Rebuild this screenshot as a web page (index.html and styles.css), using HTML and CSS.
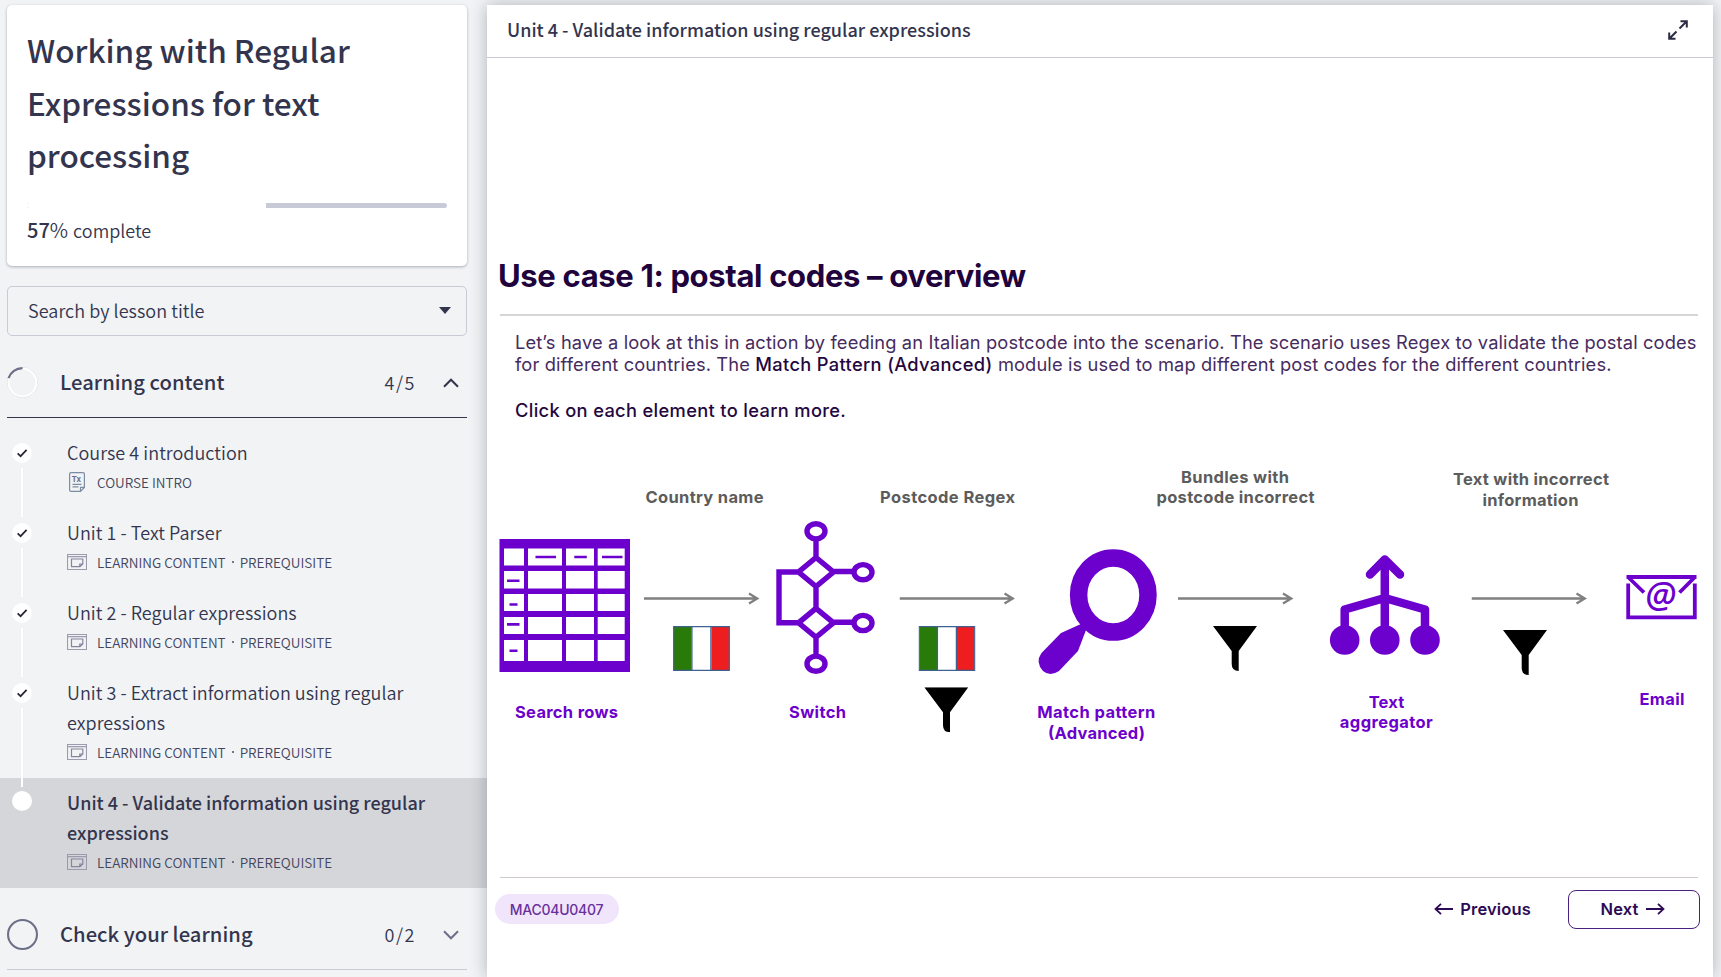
FILE: index.html
```html
<!DOCTYPE html>
<html lang="en">
<head>
<meta charset="utf-8">
<title>Working with Regular Expressions for text processing</title>
<link rel="stylesheet" href="styles.css">
</head>
<body>
<svg width="0" height="0" class="defs" aria-hidden="true">
  <symbol id="check" viewBox="0 0 20 20"><path d="M5.600 10.400 8.600 13.200 14.600 6.800" fill="none" stroke="#25263a" stroke-width="1.700"/></symbol>
  <symbol id="content" viewBox="0 0 20 16"><path d="M.5.5h19v15H.5zM.5 2.600h19" fill="none" stroke="#9a9bae" stroke-width="1.100"/><path d="M4.500 5h11.300v5l-2.800 2.700H4.500zM12.800 12.700V10h3" fill="none" stroke="#85869d" stroke-width="1.200"/></symbol>
  <symbol id="funnel" viewBox="0 0 44 45"><path d="M0 0H44L25.700 25V45Q18.700 45 18.700 38V25Z" fill="#000"/></symbol>
  <symbol id="flag" viewBox="0 0 57 45"><path d="M1 1h17.500v43H1z" fill="#2a7a0a"/><path d="M38.500 1H56v43H38.500z" fill="#ee1d1f"/><path d="M.7.7h55.600v43.600H.7zM18.900.7v43.600M37.900.7v43.600" fill="none" stroke="#3f6190" stroke-width="1.300"/></symbol>
  <symbol id="arrow" viewBox="0 0 116 14"><path d="M0 7H113M105 1.900 113.300 7 105 12.100" fill="none" stroke="#808080" stroke-width="2.300"/></symbol>
</svg>
<div class="app">
  <aside class="sidebar">
    <section class="course-card">
      <h1>Working with Regular<br>Expressions for text<br>processing</h1>
      <div class="progress"><div class="progress-done" style="width:57%"></div></div>
      <p class="percent"><b>57</b><span class="pct">%</span> complete</p>
    </section>
    <div class="search"><span>Search by lesson title</span><i class="caret"></i></div>

    <header class="section open">
      <svg class="ring" viewBox="0 0 30 30"><circle cx="15" cy="15" r="14.300" fill="none" stroke="#b9bac6" stroke-width=".8" stroke-dasharray="1.500 1"/><circle cx="15" cy="15" r="13.500" fill="none" stroke="#fff" stroke-width="2"/><path d="M1.500 10.800A14.200 14.200 0 0 1 15 1.100" fill="none" stroke="#6d6f87" stroke-width="2.200"/></svg>
      <h2>Learning content</h2><span class="count">4/5</span>
      <svg class="chev" viewBox="0 0 16 10"><path d="M1 8.700 8 1.700 15 8.700" fill="none" stroke="#33354e" stroke-width="2"/></svg>
    </header>
    <ol class="lessons">
      <li><div class="rail"><svg class="dot"><use href="#check"/></svg><i class="stem"></i></div>
        <div class="body"><p class="name">Course 4 introduction</p>
        <p class="meta"><svg class="mi doc" viewBox="0 0 16 20"><path d="M2 .6h12q1.400 0 1.400 1.400v13.500L11.500 19.400H2Q.6 19.400.6 18V2Q.6.6 2 .6zM11.500 19.400v-4h4M3.500 12.400h9M3.500 14.800h6" fill="none" stroke="#7d8ba3" stroke-width="1.200"/><text x="2.800" y="10" font-size="8" font-weight="700" fill="#6b6d86">Tx</text></svg>COURSE INTRO</p></div></li>
      <li><div class="rail"><svg class="dot"><use href="#check"/></svg><i class="stem"></i></div>
        <div class="body"><p class="name">Unit 1 - Text Parser</p>
        <p class="meta"><svg class="mi"><use href="#content"/></svg>LEARNING CONTENT<i class="sep"></i>PREREQUISITE</p></div></li>
      <li><div class="rail"><svg class="dot"><use href="#check"/></svg><i class="stem"></i></div>
        <div class="body"><p class="name">Unit 2 - Regular expressions</p>
        <p class="meta"><svg class="mi"><use href="#content"/></svg>LEARNING CONTENT<i class="sep"></i>PREREQUISITE</p></div></li>
      <li><div class="rail"><svg class="dot"><use href="#check"/></svg><i class="stem long"></i></div>
        <div class="body"><p class="name">Unit 3 - Extract information using regular<br>expressions</p>
        <p class="meta"><svg class="mi"><use href="#content"/></svg>LEARNING CONTENT<i class="sep"></i>PREREQUISITE</p></div></li>
      <li class="current"><div class="rail"><svg class="dot"></svg></div>
        <div class="body"><p class="name">Unit 4 - Validate information using regular<br>expressions</p>
        <p class="meta"><svg class="mi"><use href="#content"/></svg>LEARNING CONTENT<i class="sep"></i>PREREQUISITE</p></div></li>
    </ol>
    <header class="section closed">
      <svg class="ring" viewBox="0 0 30 30"><circle cx="15" cy="15" r="14" fill="none" stroke="#6d6f87" stroke-width="2"/></svg>
      <h2>Check your learning</h2><span class="count">0/2</span>
      <svg class="chev" viewBox="0 0 16 10"><path d="M1 1.300 8 8.300 15 1.300" fill="none" stroke="#6d6f87" stroke-width="2"/></svg>
    </header>
  </aside>

  <main class="panel">
    <header class="bar"><span class="bar-title">Unit 4 - Validate information using regular expressions</span>
      <svg class="expand" viewBox="0 0 20 20"><path d="M11.500 8.500 18.500 1.500M12.500 1.200h6.300v6.300M8.500 11.500 1.500 18.500M1.200 12.500v6.300h6.300" fill="none" stroke="#2b2c44" stroke-width="2"/></svg></header>
    <article class="slide">
      <h2 class="slide-title">Use case 1: postal codes – overview</h2>
      <div class="copy">
        <p>Let’s have a look at this in action by feeding an Italian postcode into the scenario. The scenario uses Regex to validate the postal codes<br>for different countries. The <b>Match Pattern (Advanced)</b> module is used to map different post codes for the different countries.</p>
        <p class="hint">Click on each element to learn more.</p>
      </div>
      <svg class="diagram" viewBox="487 440 1226 310">
        <g class="edge">
          <text x="704.500" y="502.700" textLength="118">Country name</text>
          <text x="947.500" y="502.700" textLength="135">Postcode Regex</text>
          <text x="1235" y="482.700" textLength="108">Bundles with</text>
          <text x="1235.500" y="502.700" textLength="158">postcode incorrect</text>
          <text x="1531" y="485" textLength="156">Text with incorrect</text>
          <text x="1530.500" y="506" textLength="96">information</text>
        </g>
        <g class="node">
          <text x="566.500" y="718" textLength="103">Search rows</text>
          <text x="817.500" y="718" textLength="57">Switch</text>
          <text x="1096.300" y="718" textLength="118">Match pattern</text>
          <text x="1096.500" y="739" textLength="97">(Advanced)</text>
          <text x="1386.500" y="708" textLength="35.500">Text</text>
          <text x="1386.300" y="728" textLength="93">aggregator</text>
          <text x="1662" y="705" textLength="45">Email</text>
        </g>
        <use href="#arrow" x="644" y="591.500" width="116" height="14"/>
        <use href="#arrow" x="899.500" y="591.500" width="116" height="14"/>
        <use href="#arrow" x="1178" y="591.500" width="116" height="14"/>
        <use href="#arrow" x="1471.500" y="591.500" width="116" height="14"/>
        <use href="#flag" x="673" y="626" width="57" height="45"/>
        <use href="#flag" x="918.500" y="626" width="57" height="45"/>
        <use href="#funnel" x="924.300" y="687.300" width="44" height="45"/>
        <use href="#funnel" x="1213" y="626" width="44" height="45"/>
        <use href="#funnel" x="1503" y="630" width="44" height="45"/>
        <!-- spreadsheet -->
        <path fill="#6c00cc" d="M499.500 539h130.500v133H499.500z"/>
        <path fill="#fff" d="M504 548.500h20v17h-20zM528 548.500h34v17h-34zM566 548.500h28v17h-28zM597.700 548.500h27v17h-27zM504 571h20v17.500h-20zM528 571h34v17.500h-34zM566 571h28v17.500h-28zM597.700 571h27v17.500h-27zM504 594h20v17h-20zM528 594h34v17h-34zM566 594h28v17h-28zM597.700 594h27v17h-27zM504 617h20v17h-20zM528 617h34v17h-34zM566 617h28v17h-28zM597.700 617h27v17h-27zM504 640h20v21h-20zM528 640h34v21h-34zM566 640h28v21h-28zM597.700 640h27v21h-27z"/>
        <path stroke="#6c00cc" stroke-width="2.600" d="M535.500 557h20.500M574.300 557h12.500M602 557h20.500M507 580.800h12.500M509.500 604.500h8M507 624.400h12.500M509.500 650.700h8"/>
        <!-- router -->
        <g fill="none" stroke="#6c00cc" stroke-width="5.400">
          <ellipse cx="816" cy="531.300" rx="9" ry="7.600"/><ellipse cx="863" cy="572.200" rx="9" ry="7.600"/><ellipse cx="863" cy="623" rx="9" ry="7.600"/><ellipse cx="816" cy="663.700" rx="9" ry="7.600"/>
          <path d="M816 541V558M816 586V609M816 637V655M834 571.500H853M834 622.300H853M799 572H779V622.800H799M816 557.500 833.500 572 816 586.500 798.500 572ZM816 608.300 833.500 622.800 816 637.300 798.500 622.800Z"/>
        </g>
        <!-- magnifier -->
        <ellipse cx="1113.300" cy="595" rx="34.700" ry="37" fill="none" stroke="#6c00cc" stroke-width="17.500"/>
        <path fill="#6c00cc" d="M1081 624 1086 630 1078 651 1059 671Q1050 677 1043 671 1035 662 1041.500 653L1061 633Z"/>
        <!-- aggregator -->
        <g fill="none" stroke="#6c00cc" stroke-width="8.500" stroke-linecap="round" stroke-linejoin="round"><path d="M1384.800 635V560M1370 574.500 1384.800 559.500 1400 574.500M1344.700 635V609.500L1384.800 598 1425 609.500V635"/></g>
        <g fill="#6c00cc"><circle cx="1344.700" cy="640" r="14.800"/><circle cx="1384.800" cy="640" r="14.800"/><circle cx="1425" cy="640" r="14.800"/></g>
        <!-- envelope -->
        <path d="M1628.200 583.500V617.300H1694.800V583.500M1626.500 577H1696.500M1628.500 577.500 1644 592.500M1694.500 577.500 1679.500 592.500" fill="none" stroke="#6c00cc" stroke-width="3.800"/>
        <text class="at" x="1660.500" y="608">@</text>
      </svg>
      <footer class="controls">
        <span class="code">MAC04U0407</span>
        <a class="prev"><svg class="ar" viewBox="0 0 19 12"><path d="M19 6H1.500M7 .8 1.500 6 7 11.200" fill="none" stroke="#2d0a55" stroke-width="1.800"/></svg><span>Previous</span></a>
        <a class="next"><span>Next</span><svg class="ar" viewBox="0 0 19 12"><path d="M0 6H17.500M12 .8 17.500 6 12 11.200" fill="none" stroke="#2d0a55" stroke-width="1.800"/></svg></a>
      </footer>
    </article>
  </main>
</div>
</body>
</html>
```
FILE: styles.css
```css
* { box-sizing: border-box; }
body { margin: 0; background: #f1f3f5; color: #33354e; font-family: "Noto Sans CJK SC", "Noto Sans", sans-serif; overflow: hidden; }
h1, h2, p, ol { margin: 0; padding: 0; font-weight: 400; }
.defs { position: absolute; }
.app { display: flex; height: 977px; padding-top: 5px; }
.sidebar { width: 487px; flex: none; }

.course-card { width: 460px; height: 261px; margin-left: 7px; padding: 18px 20px 0; background: #fff; border-radius: 5px; box-shadow: 0 1px 3px rgba(40, 42, 60, .35); }
.course-card h1 { font-size: 31.500px; line-height: 52.500px; font-weight: 500; white-space: nowrap; }
.progress { height: 5px; margin-top: 22px; background: #c8cad7; border-radius: 3px; overflow: hidden; }
.progress-done { height: 5px; background: #fff; }
.percent { margin-top: 5px; font-size: 18px; line-height: 34px; font-weight: 350; }
.percent b { font-weight: 500; font-size: 20px; }
.pct { font-size: 20px; margin-right: 1px; }
.search { display: flex; align-items: center; justify-content: space-between; width: 460px; height: 50px; margin: 20px 0 0 7px; padding: 0 15px 3px 20px; border: 1px solid #c8cad7; border-radius: 5px; font-size: 18px; font-weight: 350; letter-spacing: .05px; }
.caret { border: 6px solid transparent; border-top: 7px solid #33354e; border-bottom: 0; position: relative; top: 1px; }

.section { display: flex; align-items: center; width: 460px; margin-left: 7px; }
.section h2 { margin-left: 22px; padding-bottom: 2px; font-size: 20.200px; line-height: 30px; font-weight: 500; letter-spacing: .04px; flex: 1; }
.open { height: 82px; padding-top: 12px; border-bottom: 1px solid #33354e; }
.closed { height: 82px; padding-top: 12px; border-bottom: 1px solid #c8cad7; }
.ring { width: 31px; height: 31px; }
.count { width: 58.500px; padding-bottom: 2px; font-size: 18px; font-weight: 350; letter-spacing: 1.500px; }
.chev { width: 16px; height: 10px; margin-right: 8px; }

.lessons { list-style: none; padding-top: 10px; }
.lessons li { display: flex; height: 80px; }
.lessons li:nth-child(n+4) { height: 110px; }
.rail { width: 67px; padding: 15px 0 0 12px; }
.dot { display: block; width: 20px; height: 20px; background: #fff; border-radius: 50%; }
.stem { display: block; width: 2px; height: 49px; margin: 5px 0 0 9px; background: #fff; box-shadow: 0 0 1px #d0d1da; }
.stem.long { height: 79px; position: relative; z-index: 1; }
.body { padding-top: 9px; white-space: nowrap; }
.name { font-size: 18px; line-height: 30px; font-weight: 350; letter-spacing: .04px; }
.meta { display: flex; align-items: center; font-size: 13.500px; line-height: 30px; font-weight: 350; color: #44465e; }
.mi { width: 20px; height: 16px; margin-right: 10px; }
.doc { width: 16px; height: 20px; margin: 0 12px 0 2px; }
.sep { width: 2px; height: 2px; margin: 0 6px; border-radius: 50%; background: #4a4c64; }
.current { background: #d5d6da; }
.current .rail { padding-top: 13px; }
.current .name { font-weight: 500; letter-spacing: 0; }

.panel { width: 1226px; background: #fff; box-shadow: 0 0 16px rgba(40, 42, 60, .32); }
.bar { display: flex; align-items: center; justify-content: space-between; height: 53px; padding: 0 25px 3px 20px; border-bottom: 1px solid #c8cad7; font-size: 18px; font-weight: 500; }
.bar-title { padding-bottom: 2px; }
.expand { width: 20px; height: 20px; }
.slide { padding-top: 195px; font-family: Inter, sans-serif; color: #25073f; }
.slide-title { height: 63px; margin: 0 15px 0 13px; border-bottom: 2px solid #d8d5d8; font-size: 31px; line-height: 46px; font-weight: 700; letter-spacing: -.35px; text-indent: -2px; color: #20033c; white-space: nowrap; }
.copy { height: 124px; padding: 15px 0 0 28px; font-size: 18.300px; line-height: 22px; font-weight: 300; letter-spacing: .125px; white-space: nowrap; color: #462b60; }
.copy b, .hint { font-weight: 500; letter-spacing: .33px; color: #25073f; }
.hint { margin-top: 24px; }
.diagram { display: block; width: 1226px; height: 310px; }
.diagram text { text-anchor: middle; font-size: 16.500px; font-weight: 700; }
.edge { fill: #5c5c5c; }
.node { fill: #6c00cc; }
.diagram .at { font-family: "Noto Sans", sans-serif; font-size: 36px; font-weight: 500; font-style: italic; fill: #6c00cc; }
.controls { display: flex; align-items: flex-start; height: 60px; margin: 127px 13px 0 8px; padding-top: 13px; position: relative; }
.controls::before { content: ""; position: absolute; left: 5px; right: 2px; top: 0; border-top: 1px solid #cfc9cf; }
.code { width: 124px; height: 30px; margin: 4px auto 0 -.5px; padding-top: 1px; border-radius: 15px; background: #f1e5fb; color: #69309c; font-size: 14px; line-height: 30px; font-weight: 500; letter-spacing: -.25px; text-align: center; }
.prev, .next { display: flex; align-items: center; height: 39px; gap: 7px; padding-bottom: 1px; font-size: 16.500px; font-weight: 600; color: #2d0a55; letter-spacing: .15px; }
.prev { margin-right: 37px; }
.next { width: 132px; padding-right: 3px; justify-content: center; border: 1.500px solid #4b1f7d; border-radius: 8px; }
.ar { width: 19px; height: 12px; }
```
